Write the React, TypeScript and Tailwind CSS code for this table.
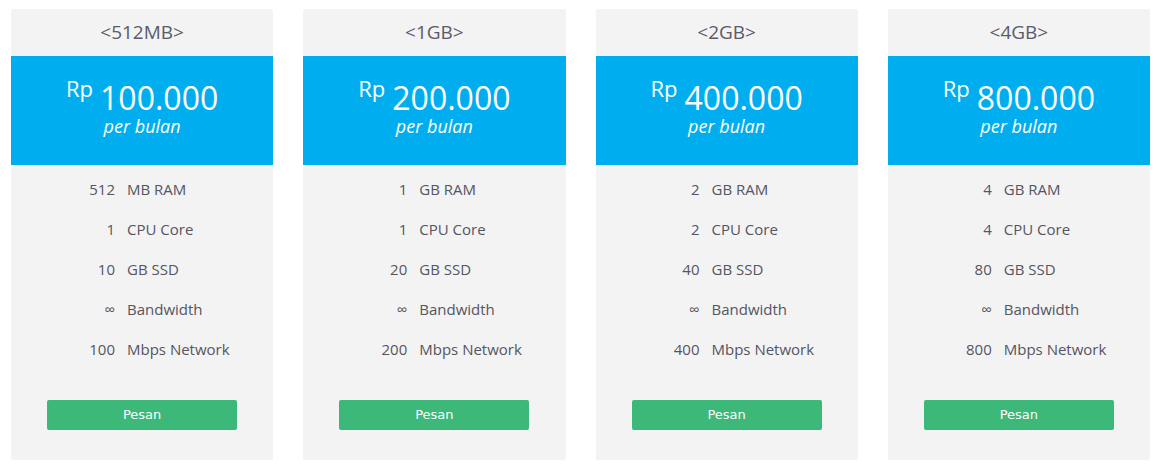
import React from "react";

const plans = [
  { name: "<512MB>", price: "100.000", ram: "512", ramU: "MB RAM", cpu: "1", ssd: "10", net: "100" },
  { name: "<1GB>", price: "200.000", ram: "1", ramU: "GB RAM", cpu: "1", ssd: "20", net: "200" },
  { name: "<2GB>", price: "400.000", ram: "2", ramU: "GB RAM", cpu: "2", ssd: "40", net: "400" },
  { name: "<4GB>", price: "800.000", ram: "4", ramU: "GB RAM", cpu: "4", ssd: "80", net: "800" },
];

export default function App() {
  return (
    <div className="w-[1161px] h-[471px] bg-white px-[11px] pt-[9px] flex gap-[30px] font-['Open_Sans',sans-serif]">
      {plans.map((p) => {
        const rows: [string, string][] = [
          [p.ram, p.ramU],
          [p.cpu, "CPU Core"],
          [p.ssd, "GB SSD"],
          ["∞", "Bandwidth"],
          [p.net, "Mbps Network"],
        ];
        return (
          <div key={p.name} className="w-[262.25px] h-[451px] bg-[#f3f3f3] rounded-[2px] flex flex-col">
            <div className="h-[47px] flex items-center justify-center text-[19px] text-[#5b5b6b]">
              {p.name}
            </div>
            <div className="h-[109px] bg-[#00aeef] text-white flex flex-col items-center pt-[17px]">
              <div className="flex items-start leading-none h-[41px]">
                <span className="text-[22px] mr-[7px] mt-[4px]">Rp</span>
                <span className="text-[32px] mt-[9px]">{p.price}</span>
              </div>
              <div className="italic text-[18px] leading-none mt-[3px]">per bulan</div>
            </div>
            <div className="pt-[4px] flex flex-col">
              {rows.map(([n, l], i) => (
                <div key={i} className="h-[40px] grid grid-cols-[104px_1fr] gap-x-[12px] items-center text-[15px] text-[#55555f]">
                  <span className="text-right">{n}</span>
                  <span>{l}</span>
                </div>
              ))}
            </div>
            <div className="flex justify-center mt-[31px]">
              <button className="w-[190px] h-[30px] bg-[#3cb878] rounded-[2px] text-white text-[13px] font-['DejaVu_Sans',sans-serif]">
                Pesan
              </button>
            </div>
          </div>
        );
      })}
    </div>
  );
}
